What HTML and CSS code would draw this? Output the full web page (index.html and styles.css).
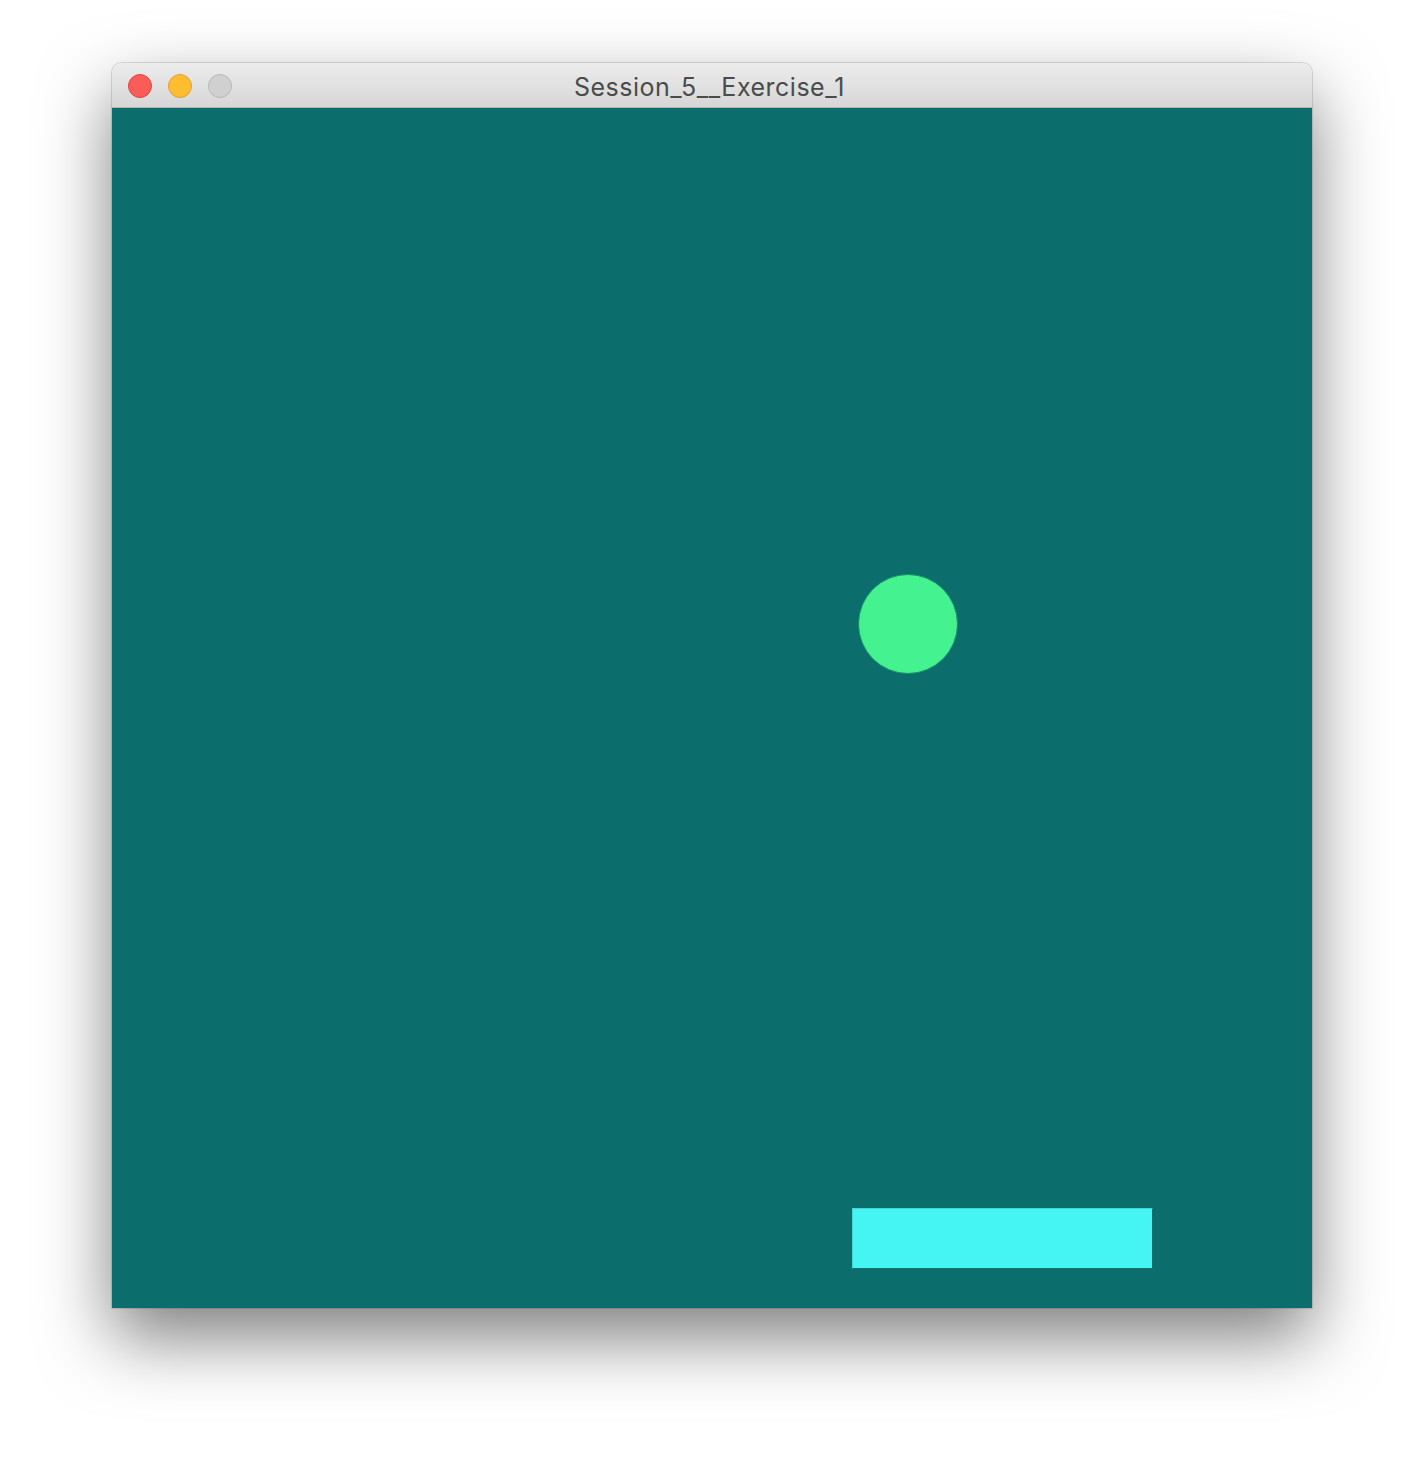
FILE: index.html
```html
<!DOCTYPE html>
<html>
<head>
<meta charset="utf-8">
<link rel="stylesheet" href="styles.css">
</head>
<body>
<div class="window">
  <div class="titlebar">
    <div class="lights">
      <span class="light red"></span>
      <span class="light yellow"></span>
      <span class="light gray"></span>
    </div>
    <div class="title">Session_5__Exercise_1</div>
  </div>
  <div class="canvas">
    <div class="ball"></div>
    <div class="paddle"></div>
  </div>
</div>
</body>
</html>
```

FILE: styles.css
```css
html, body {
  margin: 0;
  padding: 0;
  background: #ffffff;
}
body {
  width: 1424px;
  height: 1468px;
  overflow: hidden;
  padding: 63px 0 0 112px;
  box-sizing: border-box;
  font-family: "Inter", "Roboto", "Liberation Sans", sans-serif;
}
.window {
  width: 1200px;
  border-radius: 10px 10px 0 0;
  box-shadow: 0 0 0 1px rgba(0,0,0,0.12), 0 30px 70px rgba(0,0,0,0.5);
  display: flex;
  flex-direction: column;
}
.titlebar {
  height: 44px;
  border-radius: 10px 10px 0 0;
  background: linear-gradient(#ececec, #d6d6d6);
  border-bottom: 1px solid #b4b4b4;
  position: relative;
  display: flex;
  align-items: center;
  justify-content: center;
}
.lights {
  position: absolute;
  left: 16px;
  top: 11px;
  display: flex;
  gap: 16px;
}
.light {
  width: 22px;
  height: 22px;
  border-radius: 50%;
  display: block;
}
.red { background: #fc5c57; border: 1px solid #e0443e; }
.yellow { background: #febd30; border: 1px solid #dea030; }
.gray { background: #d0d0d0; border: 1px solid #b8b8b8; }
.title {
  font-size: 25px;
  color: #4b4b4b;
  letter-spacing: 0.5px;
  padding-top: 4px;
  padding-right: 5px;
}
.canvas {
  width: 1200px;
  height: 1200px;
  background: #0c6d6d;
  position: relative;
}
.ball {
  position: absolute;
  left: 746px;
  top: 466px;
  width: 98px;
  height: 98px;
  border-radius: 50%;
  background: #44f28f;
  border: 1px solid #1a8a6a;
}
.paddle {
  position: absolute;
  left: 740px;
  top: 1100px;
  width: 299px;
  height: 59px;
  background: #44f5f3;
  border: 1px solid #3fd6d4;
  border-right-color: #12706f;
  border-bottom-color: #12706f;
}
```
